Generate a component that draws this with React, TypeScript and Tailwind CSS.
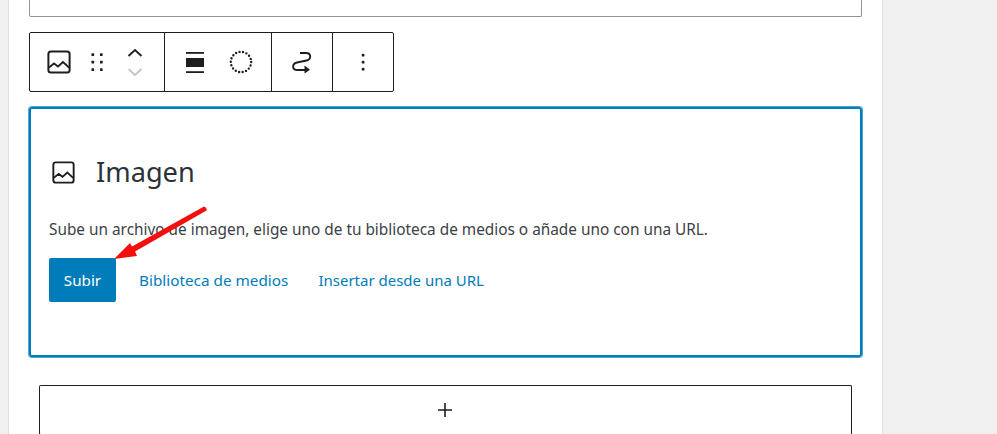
const ImageIcon = ({ className }: { className: string }) => (
  <svg className={className} viewBox="0 0 24 24" fill="none" stroke="currentColor">
    <rect x="1.4" y="1.4" width="21.2" height="21.2" rx="2.5" strokeWidth="2" />
    <path d="M2 17.5 L7 13.5 L11 16.5 L16 12 L22 17.5" strokeWidth="1.8" />
  </svg>
)

const Dots = () => (
  <svg className="w-6 h-6" viewBox="0 0 24 24" fill="#1e1e1e">
    <rect x="6.5" y="3.3" width="2.6" height="2.6" rx="0.5" />
    <rect x="15" y="3.3" width="2.6" height="2.6" rx="0.5" />
    <rect x="6.5" y="10.8" width="2.6" height="2.6" rx="0.5" />
    <rect x="15" y="10.8" width="2.6" height="2.6" rx="0.5" />
    <rect x="6.5" y="18.3" width="2.6" height="2.6" rx="0.5" />
    <rect x="15" y="18.3" width="2.6" height="2.6" rx="0.5" />
  </svg>
)

const Movers = () => (
  <div className="flex flex-col items-center gap-[9px]">
    <svg className="w-[16px] h-[10px]" viewBox="0 0 16 10" fill="none" stroke="#1e1e1e" strokeWidth="1.8">
      <path d="M1.5 8 L8 2 L14.5 8" />
    </svg>
    <svg className="w-[16px] h-[10px]" viewBox="0 0 16 10" fill="none" stroke="#c4c4c4" strokeWidth="1.8">
      <path d="M1.5 2 L8 8 L14.5 2" />
    </svg>
  </div>
)

const AlignIcon = () => (
  <svg className="w-[18px] h-[21px]" viewBox="0 0 18 21" fill="#1e1e1e">
    <rect x="0" y="0" width="18" height="1.8" />
    <rect x="0" y="6" width="18" height="9" />
    <rect x="0" y="19.2" width="18" height="1.8" />
  </svg>
)

const Circle = () => (
  <svg className="w-6 h-6" viewBox="0 0 24 24" fill="none" stroke="#1e1e1e">
    <circle cx="12" cy="12" r="10.2" strokeWidth="2.4" strokeLinecap="round" strokeDasharray="0 3.56" />
  </svg>
)

const Wave = () => (
  <svg className="w-6 h-6" viewBox="0 0 24 24" fill="none" stroke="#1e1e1e" strokeWidth="1.9">
    <path d="M10 3 H16 C21.5 3 21.5 9.5 16.5 10.5 L7 12.5 C1.5 14 2 20 7.5 20 H15" />
    <path d="M14.5 15.5 L20 19.8 L14.5 23.5 Z" fill="#1e1e1e" stroke="none" />
  </svg>
)

const Kebab = () => (
  <svg className="w-6 h-6" viewBox="0 0 24 24" fill="#1e1e1e">
    <rect x="10.7" y="3.8" width="2.8" height="2.8" rx="1.2" />
    <rect x="10.7" y="10.8" width="2.8" height="2.8" rx="1.2" />
    <rect x="10.7" y="17.8" width="2.8" height="2.8" rx="1.2" />
  </svg>
)

export default function App() {
  return (
    <div className="relative flex h-[434px] w-[997px] overflow-hidden bg-[#f0f0f0] text-[#3c4146] font-['Noto_Sans','Open_Sans',sans-serif]">
      <div className="ml-2 w-[875px] h-full bg-white border-x border-[#e0e0e0] pl-5 pr-5 flex-none">
        <div className="h-[18px] -mt-px w-[833px] border border-[#949494] rounded-[2px] border-t-0" />

        <div className="mt-[15px] flex h-[60px] w-[365px] border border-[#1e1e1e] rounded-[2px]">
          <div className="flex w-[135px] items-center border-r border-[#1e1e1e] pl-[17px]">
            <ImageIcon className="w-[24px] h-[24px] text-[#1e1e1e]" />
            <div className="ml-[14px]"><Dots /></div>
            <div className="ml-[18px]"><Movers /></div>
          </div>
          <div className="flex w-[107px] items-center border-r border-[#1e1e1e] pl-[21px]">
            <AlignIcon />
            <div className="ml-[25px]"><Circle /></div>
          </div>
          <div className="flex w-[61px] items-center justify-center border-r border-[#1e1e1e]">
            <Wave />
          </div>
          <div className="flex flex-1 items-center justify-center">
            <Kebab />
          </div>
        </div>

        <div className="mt-[15px] h-[250px] w-[833px] border-2 border-[#007cba] rounded-[3px] shadow-[0_0_0_1px_#4fa5d0] pl-[18px]">
          <div className="flex items-center pt-[45px] h-[81px] text-[#1e1e1e]">
            <ImageIcon className="ml-[3px] w-[23px] h-[23px]" />
            <span className="ml-[21px] text-[27.2px] leading-[34px] text-[#2c3338]">Imagen</span>
          </div>
          <p className="mt-[30px] text-[15.37px] leading-[20px] whitespace-nowrap">
            Sube un archivo de imagen, elige uno de tu biblioteca de medios o añade uno con una URL.
          </p>
          <div className="mt-[18px] flex items-center">
            <button className="h-[44px] w-[67px] rounded-[2px] bg-[#007cba] text-white text-[15.2px]">Subir</button>
            <a className="ml-[23px] text-[#007cba] text-[15.3px]">Biblioteca de medios</a>
            <a className="ml-[30px] text-[#007cba] text-[15px]">Insertar desde una URL</a>
          </div>
        </div>

        <div className="ml-[10px] mt-[28px] flex h-[50px] w-[813px] items-center justify-center border border-[#1e1e1e] border-b-[#bdbdbd] rounded-[2px] text-[#1e1e1e]">
          <svg className="w-6 h-6 -ml-[2px]" viewBox="0 0 24 24" fill="none" stroke="currentColor" strokeWidth="1.6">
            <path d="M12 5 V19 M5 12 H19" />
          </svg>
        </div>
      </div>

      {/* red annotation arrow over the block */}
      <svg className="absolute left-[110px] top-[204px] w-[100px] h-[60px]" viewBox="0 0 100 60" fill="#f40f0f">
        <path d="M4 55 L20 39 L22 42.5 L94 2.5 Q97.5 4 96.5 6.5 L25 47.5 L27 52 Z" />
      </svg>
    </div>
  )
}
